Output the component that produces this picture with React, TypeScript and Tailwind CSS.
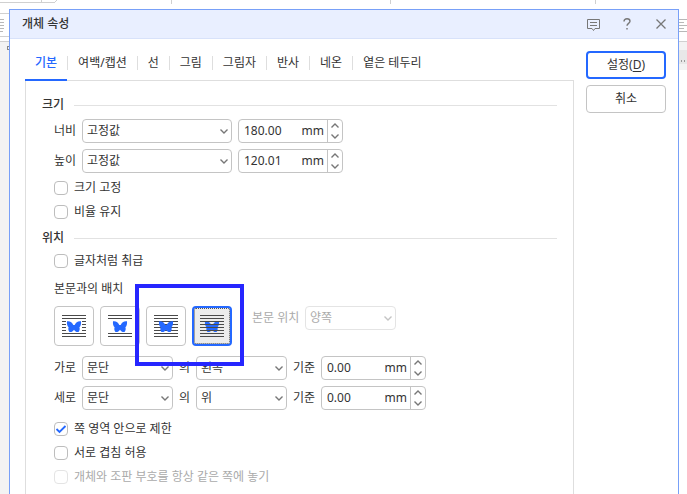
import { useState } from "react";
import type { ReactNode } from "react";


const TABS = [
  "기본",
  "여백/캡션",
  "선",
  "그림",
  "그림자",
  "반사",
  "네온",
  "옅은 테두리"
];


type WrapMode = "square" | "topBottom" | "front" | "behind";

const WRAP_MODES: { id: WrapMode; label: string }[] = [
  { id: "square", label: "어울림" },
  { id: "topBottom", label: "자리 차지" },
  { id: "front", label: "글 앞으로" },
  { id: "behind", label: "글 뒤로" }
];


function Chevron({ up = false, className = "" }: { up?: boolean; className?: string }) {
  return (
    <svg
      viewBox="0 0 8 5"
      width="8"
      height="5"
      fill="none"
      stroke="currentColor"
      strokeWidth="1.4"
      className={className}
      aria-hidden="true"
    >
      <path d={up ? "M0.5 4.5 4 1l3.5 3.5" : "M0.5 0.5 4 4l3.5-3.5"} />
    </svg>
  );
}


function Select({
  label,
  options,
  className,
  disabled = false
}: {
  label: string;
  options: string[];
  className: string;
  disabled?: boolean;
}) {
  return (
    <div className={`relative shrink-0 ${className}`}>
      <select
        aria-label={label}
        disabled={disabled}
        className="block h-6 w-full appearance-none rounded border border-[#c4c4c4] bg-white pl-1 pr-4 text-[#333] disabled:border-[#e4e4e4] disabled:text-[#aaa] disabled:opacity-100"
      >
        {options.map((o) => (
          <option key={o}>{o}</option>
        ))}
      </select>
      <Chevron
        className={`pointer-events-none absolute right-1 top-2.5 ${disabled ? "text-[#c4c4c4]" : "text-[#777]"}`}
      />
    </div>
  );
}


function Spinner({ label, initial }: { label: string; initial: string }) {

  const [value, setValue] = useState(initial);

  const step = (d: number) =>
    setValue((v) => Math.max(0, (parseFloat(v) || 0) + d).toFixed(2));

  return (
    <div className="flex h-6 w-[105px] shrink-0 overflow-hidden rounded border border-[#c4c4c4] bg-white">
      <input
        aria-label={label}
        value={value}
        onChange={(e) => setValue(e.target.value)}
        className="w-0 min-w-0 flex-1 pl-[5px] text-[#333] outline-none"
      />
      <span className="pr-[3px] leading-[22px]">mm</span>
      <div className="flex w-[15px] flex-col border-l border-[#c4c4c4] text-[#777]">
        <button
          type="button"
          aria-label={`${label} 늘리기`}
          onClick={() => step(1)}
          className="flex flex-1 items-center justify-center"
        >
          <Chevron up />
        </button>
        <button
          type="button"
          aria-label={`${label} 줄이기`}
          onClick={() => step(-1)}
          className="flex flex-1 items-center justify-center"
        >
          <Chevron />
        </button>
      </div>
    </div>
  );
}


function Check({
  children,
  checked = false,
  disabled = false
}: {
  children: ReactNode;
  checked?: boolean;
  disabled?: boolean;
}) {
  return (
    <label className={`flex h-6 items-center gap-1.5 ${disabled ? "text-[#aaa]" : ""}`}>
      <span className="relative flex">
        <input
          type="checkbox"
          defaultChecked={checked}
          disabled={disabled}
          className="peer size-3.5 appearance-none rounded border border-[#bdbdbd] bg-white disabled:border-[#e4e4e4]"
        />
        <svg
          viewBox="0 0 14 14"
          className="pointer-events-none absolute inset-0 hidden size-3.5 peer-checked:block"
          fill="none"
          stroke="#2468ff"
          strokeWidth="1.8"
          aria-hidden="true"
        >
          <path d="M2.5 7 5.5 10 11.5 4" />
        </svg>
      </span>
      {children}
    </label>
  );
}


function SectionTitle({ children }: { children: ReactNode }) {
  return (
    <h2 className="flex h-5 items-center gap-2.5 font-medium">
      {children}
      <span className="h-px flex-1 bg-[#e2e2e2]" />
    </h2>
  );
}


function WrapIcon({ mode }: { mode: WrapMode }) {

  const rows = [0, 3, 6, 9, 12, 15, 18, 21];

  const lines = rows.map((y, i) => {
    const middle = i > 1 && i < 6;

    if (mode === "topBottom" && middle) return null;

    if (mode === "square" && middle) {
      return (
        <g key={y}>
          <rect x="0" y={y} width="4" height="1" />
          <rect x="20" y={y} width="4" height="1" />
        </g>
      );
    }

    return <rect key={y} x="0" y={y} width="24" height="1" />;
  });

  const butterfly = (
    <path
      fill="#2468ff"
      d="M5 6.300C7.800 5.800 10.300 7.300 11.300 10h1.400C13.700 7.300 16.200 5.800 19 6.300c.3 2.500-.2 4.800-1.600 6 .6 1.700.3 3.500-.9 4.700-1.900.3-3.300-.4-4.500-2.200-1.200 1.800-2.600 2.500-4.500 2.200-1.200-1.200-1.500-3-.9-4.700-1.400-1.200-1.900-3.500-1.600-6Z"
    />
  );

  return (
    <svg viewBox="0 0 24 22" width="24" height="22" fill="#4a4a4a" aria-hidden="true">
      {mode === "behind" && butterfly}
      {lines}
      {mode !== "behind" && butterfly}
    </svg>
  );
}


export default function App() {

  const [tab, setTab] = useState("기본");
  const [wrap, setWrap] = useState<WrapMode>("behind");

  return (
    <div className="relative flex h-screen flex-col overflow-hidden whitespace-nowrap bg-white font-['Noto_Sans','Noto_Sans_CJK_KR',sans-serif] text-xs text-[#333]">

      {/* Editor window behind the dialog */}
      <div className="absolute inset-0" aria-hidden="true">
        <svg width="100%" height="42" className="block" fill="#d0d0d0" shapeRendering="crispEdges">
          <path d="M0 2h54l2-2h1l-2 3H0ZM41 0h1v2h-1ZM171 0h1v4h-1ZM390 0h1v4h-1ZM595 0h1v4h-1ZM0 13h9v1H0ZM0 36h9v1H0ZM0 41h687v1H0Z" />
          <path d="M0 19h4v1H0ZM0 22h4v1H0ZM0 25h4v1H0ZM0 28h4v1H0ZM0 31h3v1H0Z" fill="#b8b8b8" />
          <path d="M679 19h8v1h-8ZM679 22h5v1h-5ZM679 25h8v1h-8ZM679 28h5v1h-5ZM679 31h8v1h-8Z" fill="#b8b8b8" />
        </svg>
        <div className="flex h-full justify-between">
          <div className="w-3 bg-[#f3f3f3] pl-[7px] pt-1">
            <div className="size-1 border border-[#888]" />
          </div>
          <div className="flex w-2 flex-col">
            <div className="h-2 bg-[#f3f3f3]" />
            <div className="flex h-3.5 items-end gap-0.5 bg-[#e8e8e8] pb-0.5 pl-0.5">
              <span className="h-0.5 w-px bg-[#999]" />
              <span className="h-0.5 w-px bg-[#999]" />
            </div>
            <div className="h-1.5 bg-[#f3f3f3]" />
          </div>
        </div>
      </div>

      <div
        role="dialog"
        aria-labelledby="dialog-title"
        className="relative ml-[9px] mr-2 mt-[9px] flex flex-1 flex-col border border-b-0 border-[#78a0f8] bg-white"
      >

        <header className="flex h-[29px] shrink-0 items-center justify-between border-b border-[#d8e2fa] bg-[#e9efff] pl-3 pr-1.5">
          <h1 id="dialog-title" className="font-medium">개체 속성</h1>
          <div className="flex gap-3 text-[#777]">
            <button type="button" aria-label="의견" className="flex size-[22px] items-center justify-center">
              <svg width="13" height="13" viewBox="0 0 13 13" fill="none" stroke="currentColor" aria-hidden="true">
                <path d="M.5 1.500h12v9H8L6.500 12.500 5 10.500H.5ZM3 4.500h7M3 7.500h7" />
              </svg>
            </button>
            <button type="button" aria-label="도움말" className="flex size-[22px] items-center justify-center">
              <svg width="8" height="12" viewBox="0 0 8 12" fill="none" stroke="currentColor" strokeWidth="1.4" aria-hidden="true">
                <path d="M1 3.500C1 1.700 2.200.8 4 .8s3 .9 3 2.500C7 5.300 4 5.500 4 7.800M4 10v1.600" />
              </svg>
            </button>
            <button type="button" aria-label="닫기" className="flex size-[22px] items-center justify-center">
              <svg width="10" height="10" viewBox="0 0 10 10" fill="none" stroke="currentColor" strokeWidth="1.3" aria-hidden="true">
                <path d="M.5.500l9 9M9.500.500l-9 9" />
              </svg>
            </button>
          </div>
        </header>

        <div className="flex min-h-0 flex-1 gap-3 pl-[15px] pr-3 pt-3">

          <div className="flex min-w-0 flex-1 flex-col">
            <div role="tablist" className="flex h-[30px] shrink-0 border-b border-[#dedede]">
              {TABS.map((t, i) => (
                <div key={t} className="flex">
                  {i > 0 && <span className="mt-[5px] h-3.5 w-px bg-[#dedede]" />}
                  <button
                    type="button"
                    role="tab"
                    aria-selected={tab === t}
                    onClick={() => setTab(t)}
                    className={`-mb-px border-b-2 px-2.5 pb-1 ${tab === t ? "border-[#2468ff] font-medium text-[#2468ff]" : "border-transparent"}`}
                  >
                    {t}
                  </button>
                </div>
              ))}
            </div>

            <div role="tabpanel" className="flex-1 border-x border-[#dedede] px-4 pt-3.5">

              <SectionTitle>크기</SectionTitle>

              <div className="mt-1 flex flex-col gap-1.5 pl-3">
                <div className="flex items-center gap-1.5">
                  <span className="w-[22px] shrink-0">너비</span>
                  <Select label="너비 종류" options={["고정값"]} className="w-[150px]" />
                  <Spinner label="너비" initial="180.00" />
                </div>
                <div className="flex items-center gap-1.5">
                  <span className="w-[22px] shrink-0">높이</span>
                  <Select label="높이 종류" options={["고정값"]} className="w-[150px]" />
                  <Spinner label="높이" initial="120.01" />
                </div>
              </div>

              <div className="mb-1 mt-[3px] pl-3">
                <Check>크기 고정</Check>
                <Check>비율 유지</Check>
              </div>

              <SectionTitle>위치</SectionTitle>

              <div className="mt-px pl-3">
                <Check>글자처럼 취급</Check>

                <p className="mt-1 leading-6">본문과의 배치</p>

                <div className="mt-[5px] flex items-start">
                  <div className="relative flex gap-1.5">
                    {WRAP_MODES.map((m) => (
                      <button
                        key={m.id}
                        type="button"
                        aria-label={m.label}
                        aria-pressed={wrap === m.id}
                        onClick={() => setWrap(m.id)}
                        className={`flex size-10 items-center justify-center rounded ${
                          wrap === m.id
                            ? "border-2 border-[#2468ff] bg-[#ececec] outline-1 -outline-offset-3 outline-dotted outline-[#555]"
                            : "border border-[#c4c4c4] bg-white"
                        }`}
                      >
                        <WrapIcon mode={m.id} />
                      </button>
                    ))}
                    {/* Highlight around the front / behind text modes */}
                    <div className="pointer-events-none absolute -bottom-5 -right-3 -top-[22px] left-[81px] z-10 border-4 border-[#2626ff]" />
                  </div>
                  <div className="ml-5 flex items-center gap-1.5 text-[#aaa]">
                    <span className="w-[47px]">본문 위치</span>
                    <Select label="본문 위치" options={["양쪽"]} className="w-[91px]" disabled />
                  </div>
                </div>

                <div className="mt-2.5 flex flex-col gap-1.5">
                  <div className="flex items-center gap-1.5">
                    <span className="w-[22px] shrink-0">가로</span>
                    <Select label="가로 기준 대상" options={["문단"]} className="w-[91px]" />
                    <span className="w-[11px] shrink-0">의</span>
                    <Select label="가로 정렬" options={["왼쪽"]} className="w-[91px]" />
                    <span className="w-[22px] shrink-0">기준</span>
                    <Spinner label="가로 위치" initial="0.00" />
                  </div>
                  <div className="flex items-center gap-1.5">
                    <span className="w-[22px] shrink-0">세로</span>
                    <Select label="세로 기준 대상" options={["문단"]} className="w-[91px]" />
                    <span className="w-[11px] shrink-0">의</span>
                    <Select label="세로 정렬" options={["위"]} className="w-[91px]" />
                    <span className="w-[22px] shrink-0">기준</span>
                    <Spinner label="세로 위치" initial="0.00" />
                  </div>
                </div>

                <div className="mt-[7px]">
                  <Check checked>쪽 영역 안으로 제한</Check>
                  <Check>서로 겹침 허용</Check>
                  <Check disabled>개체와 조판 부호를 항상 같은 쪽에 놓기</Check>
                </div>
              </div>
            </div>
          </div>

          <div className="flex w-20 shrink-0 flex-col gap-1.5">
            <button type="button" className="h-7 rounded border-2 border-[#2468ff] bg-white">
              설정(<span className="underline underline-offset-2">D</span>)
            </button>
            <button type="button" className="h-7 rounded border border-[#c4c4c4] bg-white">
              취소
            </button>
          </div>
        </div>
      </div>
    </div>
  );
}
